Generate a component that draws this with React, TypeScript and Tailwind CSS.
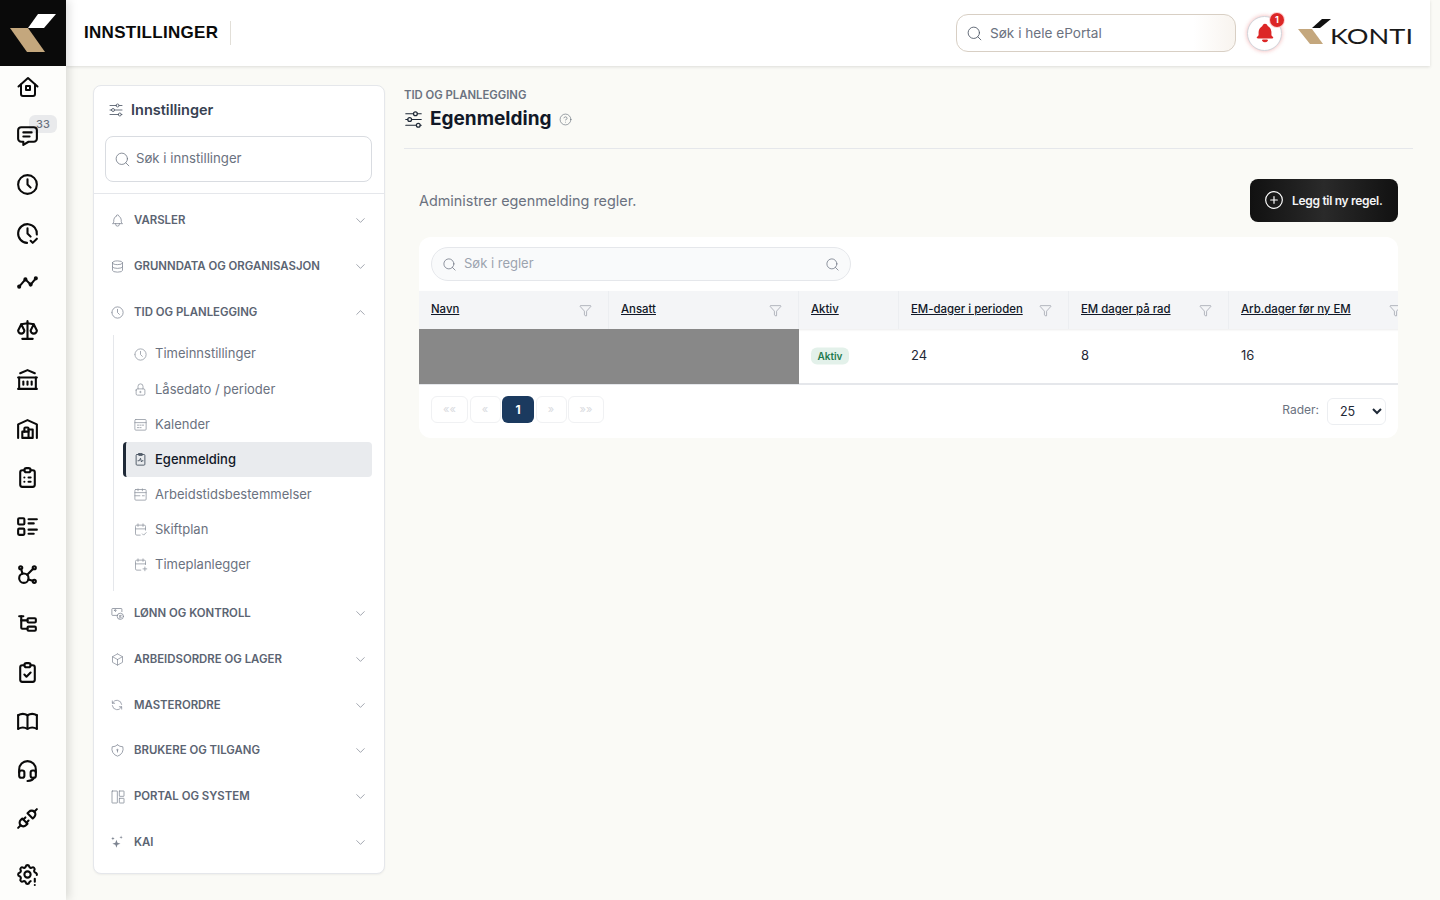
import { ReactNode } from "react";
import {
  ChevronDown,
  ChevronUp,
  CirclePlus,
  CircleQuestionMark,
  Funnel,
  Search,
} from "lucide-react";
import {
  TbAdjustmentsHorizontal,
  TbAffiliate,
  TbBell,
  TbBellFilled,
  TbBook,
  TbBox,
  TbBuildingBank,
  TbBuildingWarehouse,
  TbCalendarCheck,
  TbCalendarPlus,
  TbClipboardCheck,
  TbClipboardList,
  TbClock,
  TbClockCheck,
  TbDatabase,
  TbHeadset,
  TbListDetails,
  TbLock,
  TbMessage,
  TbPlugConnected,
  TbRefresh,
  TbScale,
  TbSettingsExclamation,
  TbShieldLock,
  TbSubtask,
  TbTimeline,
} from "react-icons/tb";

const Svg = ({ size = 24, sw = 2, children }: { size?: number; sw?: number; children: ReactNode }) => (
  <svg width={size} height={size} viewBox="0 0 24 24" fill="none" stroke="currentColor" strokeWidth={sw} strokeLinecap="round" strokeLinejoin="round">
    {children}
  </svg>
);

const HomeIcon = () => (
  <Svg>
    <path d="M2.500 11.500 12 3l9.500 8.500" />
    <path d="M5 9.500V19a2 2 0 0 0 2 2h10a2 2 0 0 0 2-2V9.500" />
    <rect x="10" y="11" width="4" height="4" />
  </Svg>
);

const PayIcon = () => (
  <Svg size={15} sw={1.2}>
    <path d="M12 15H4a1 1 0 0 1-1-1V5a1 1 0 0 1 1-1h14a1 1 0 0 1 1 1v4" />
    <path d="M10 7H7l2-2M7 7l2 2" />
    <circle cx="16.500" cy="16.500" r="5" />
    <path d="M18 15h-2a1 1 0 0 0 0 2h1a1 1 0 0 1 0 2h-2" />
  </Svg>
);
const PortalIcon = () => (
  <Svg size={16} sw={1.1}>
    <rect x="3" y="3" width="8" height="18" rx="0.5" />
    <rect x="14" y="3" width="7" height="8" rx="0.5" />
    <rect x="14" y="14" width="7" height="7" rx="0.5" />
  </Svg>
);
const TableCalIcon = () => (
  <Svg size={15} sw={1.2}>
    <rect x="3" y="4" width="18" height="17" rx="1.500" />
    <path d="M3 9h18M7 13h2M11 13h2M15 13h2M7 17h2M11 17h2" />
  </Svg>
);
const PulseClipIcon = () => (
  <Svg size={15} sw={1.5}>
    <rect x="5" y="4" width="14" height="17" rx="1.500" />
    <rect x="9" y="2.500" width="6" height="3" rx="0.5" />
    <path d="M8 14h2l2-4 1.500 6 1-2h1.500" />
  </Svg>
);
const RulesCalIcon = () => (
  <Svg size={15} sw={1.2}>
    <rect x="3" y="4" width="18" height="17" rx="1.500" />
    <path d="M3 9h18M3 14h8M15 6V3M8 6V3M15 14h3" />
  </Svg>
);
const SparkIcon = () => (
  <svg width="14" height="14" viewBox="0 0 24 24" fill="currentColor">
    <path d="M11 8l1.800 5.200L18 15l-5.200 1.800L11 22l-1.800-5.200L4 15l5.200-1.800z" />
    <path d="M5 3l.8 2.200L8 6l-2.200.8L5 9l-.8-2.200L2 6l2.200-.8z" />
    <path d="M19 1l.7 2.300L22 4l-2.300.7L19 7l-.7-2.300L16 4l2.300-.7z" />
  </svg>
);

const railTop = [
  <HomeIcon />,
  <TbMessage size={25} strokeWidth={2} />,
  <TbClock size={25} strokeWidth={2} />,
  <TbClockCheck size={25} strokeWidth={2} />,
  <TbTimeline size={25} strokeWidth={2} />,
  <TbScale size={25} strokeWidth={2} />,
  <TbBuildingBank size={25} strokeWidth={2} />,
  <TbBuildingWarehouse size={25} strokeWidth={2} />,
  <TbClipboardList size={25} strokeWidth={2} />,
  <TbListDetails size={25} strokeWidth={2} />,
  <TbAffiliate size={25} strokeWidth={2} />,
  <TbSubtask size={25} strokeWidth={2} />,
  <TbClipboardCheck size={25} strokeWidth={2} />,
  <TbBook size={25} strokeWidth={2} />,
  <TbHeadset size={25} strokeWidth={2} />,
  <TbPlugConnected size={25} strokeWidth={2} />,
];

const subItems = [
  { label: "Timeinnstillinger", icon: <TbClock size={15} strokeWidth={1.2} /> },
  { label: "Låsedato / perioder", icon: <TbLock size={15} strokeWidth={1.2} /> },
  { label: "Kalender", icon: <TableCalIcon /> },
  { label: "Egenmelding", icon: <PulseClipIcon />, active: true },
  { label: "Arbeidstidsbestemmelser", icon: <RulesCalIcon /> },
  { label: "Skiftplan", icon: <TbCalendarCheck size={15} strokeWidth={1.2} /> },
  { label: "Timeplanlegger", icon: <TbCalendarPlus size={15} strokeWidth={1.2} /> },
];

const Section = ({ icon, label, open }: { icon: ReactNode; label: string; open?: boolean }) => (
  <div className="flex h-[45.7px] items-center pl-[16px] pr-[16px]">
    <span className="flex w-[24px] shrink-0 items-center text-[#7c8390]">{icon}</span>
    <span className="flex-1 text-[11.4px] font-semibold text-[#5b6472]">{label}</span>
    {open ? <ChevronUp size={15} strokeWidth={1} className="text-[#6b7280]" /> : <ChevronDown size={15} strokeWidth={1} className="text-[#6b7280]" />}
  </div>
);

const columns = [
  { label: "Navn", w: "w-[190px]", filter: true },
  { label: "Ansatt", w: "w-[190px]", filter: true },
  { label: "Aktiv", w: "w-[100px]", filter: false },
  { label: "EM-dager i perioden", w: "w-[170px]", filter: true },
  { label: "EM dager på rad", w: "w-[160px]", filter: true },
  { label: "Arb.dager før ny EM", w: "w-[190px]", filter: true },
];

const PageButton = ({ w, children }: { w: string; children: string }) => (
  <div className={`flex h-[27px] items-center justify-center rounded-md border border-[#f0f1f3] text-[11px] text-[#d9dbe0] ${w}`}>
    {children}
  </div>
);

export default function App() {
  return (
    <div className="flex h-[900px] w-[1440px] overflow-hidden bg-[#fafaf6] font-['Inter',sans-serif] text-[#111827]">
      {/* venstre meny */}
      <aside className="relative z-20 flex h-[900px] w-[66px] shrink-0 flex-col bg-[#fdfdfb] shadow-[3px_0_9px_rgba(0,0,0,0.13)]">
        <div className="h-[66px] w-[66px] shrink-0 bg-[#0a0a0a]">
          <svg width="66" height="66" viewBox="0 0 66 66">
            <polygon points="38,14 56,14 44,28 28,28" fill="#ffffff" />
            <polygon points="10,28 28,28 45,52 27,52" fill="#c4a77d" />
          </svg>
        </div>
        <div className="-mt-[3.5px] flex flex-col">
          {railTop.map((icon, i) => (
            <div key={i} className="relative flex h-[48.8px] w-[55px] items-center justify-center text-[#0a0a0a]">
              {i === 1 && (
                <span className="absolute left-[29px] top-[4px] flex h-[18px] w-[28px] items-center justify-center rounded-md bg-[#e9eaec] text-[11px] font-medium text-[#6b7280]">
                  33
                </span>
              )}
              <span className="relative">{icon}</span>
            </div>
          ))}
        </div>
        <div className="mt-[7.7px] flex h-[48px] w-[55px] items-center justify-center text-[#0a0a0a]">
          <TbSettingsExclamation size={25} strokeWidth={2} />
        </div>
      </aside>

      <div className="flex w-[1374px] flex-col">
        {/* toppfelt */}
        <header className="relative z-10 flex h-[66px] w-[1364px] shrink-0 items-center bg-white pl-[18px] shadow-[0_1px_3px_rgba(0,0,0,0.12)]">
          <h1 className="font-['Liberation_Sans',sans-serif] text-[17px] font-bold tracking-[0.3px] text-[#0a0a0a]">INNSTILLINGER</h1>
          <div className="ml-[12px] h-[24px] w-px bg-[#e2dfd8]" />
          <div className="ml-auto flex h-[38px] w-[280px] items-center rounded-xl border border-[#d8cfc4] bg-gradient-to-r from-white from-85% to-[#f8f4ef] pl-[9px]">
            <Search size={17} strokeWidth={1.2} className="text-[#4b5563]" />
            <span className="ml-[7px] text-[13.6px] text-[#6b7280]">Søk i hele ePortal</span>
          </div>
          <div className="relative ml-[11px] flex h-[35px] w-[35px] items-center justify-center rounded-full border border-[#d1d5db] bg-white shadow-[0_0_4px_rgba(220,38,38,0.35)]">
            <TbBellFilled size={22} className="text-[#dc2626]" />
            <span className="absolute -right-[3px] -top-[1px] flex h-[14px] w-[14px] -translate-y-[3px] items-center justify-center rounded-full bg-[#dc2626] text-[9px] font-bold text-white shadow-[0_0_0_1px_rgba(254,202,202,0.9)]">
              1
            </span>
          </div>
          <svg width="116" height="30" viewBox="0 0 116 30" className="ml-[16px] mr-[16px]">
            <polygon points="24,1 33,1 22,10 14,10" fill="#111111" />
            <polygon points="0,11 14,11 25,26 12,26" fill="#c4a77d" />
            <text x="32" y="26" textLength="83" lengthAdjust="spacingAndGlyphs" fontFamily="Lato, sans-serif" fontSize="21" fill="#1a1a1a">
              KONTI
            </text>
          </svg>
        </header>

        <main className="flex flex-1 pl-[27px] pt-[19px]">
          {/* innstillingsmeny */}
          <nav className="flex h-[789px] w-[292px] shrink-0 flex-col rounded-lg border border-[#e5e7eb] bg-white shadow-[0_1px_2px_rgba(0,0,0,0.05)]">
            <div className="mb-[2px] flex h-[48px] items-center pl-[13px]">
              <TbAdjustmentsHorizontal size={18} strokeWidth={1.1} className="text-[#4b5563]" />
              <span className="ml-[6px] text-[14.5px] font-semibold text-[#374151]">Innstillinger</span>
            </div>
            <div className="ml-[11px] mr-[12px] flex h-[46px] items-center rounded-lg border border-[#d9dce1] pl-[8px]">
              <Search size={17} strokeWidth={1.1} className="text-[#6b7280]" />
              <span className="ml-[5px] text-[13.2px] text-[#6b7280]">Søk i innstillinger</span>
            </div>
            <div className="mt-[11px] h-px bg-[#e5e7eb]" />
            <div className="mt-[4px] flex flex-col">
              <Section icon={<TbBell size={15} strokeWidth={1.2} />} label="VARSLER" />
              <Section icon={<TbDatabase size={15} strokeWidth={1.2} />} label="GRUNNDATA OG ORGANISASJON" />
              <Section icon={<TbClock size={15} strokeWidth={1.2} />} label="TID OG PLANLEGGING" open />
              <div className="ml-[19px] mr-[12px] flex flex-col border-l border-[#e5e7eb] pb-[8.5px] pl-[9px] pt-[1.5px]">
                {subItems.map((item) => (
                  <div
                    key={item.label}
                    className={
                      item.active
                        ? "my-[0.5px] flex h-[34.15px] items-center rounded-[4px] border-l-[3px] border-[#1f2937] bg-[#e9ebee] pl-[7px] text-[13px] font-medium text-[#111827]"
                        : "flex h-[35.15px] items-center pl-[10px] text-[13px] text-[#6b7280]"
                    }
                  >
                    <span className={item.active ? "flex w-[22px] shrink-0 items-center text-[#4b5563]" : "flex w-[22px] shrink-0 items-center text-[#8b929c]"}>
                      {item.icon}
                    </span>
                    {item.label}
                  </div>
                ))}
              </div>
              <Section icon={<PayIcon />} label="LØNN OG KONTROLL" />
              <Section icon={<TbBox size={15} strokeWidth={1.1} />} label="ARBEIDSORDRE OG LAGER" />
              <Section icon={<TbRefresh size={14} strokeWidth={1.2} />} label="MASTERORDRE" />
              <Section icon={<TbShieldLock size={15} strokeWidth={1.2} />} label="BRUKERE OG TILGANG" />
              <Section icon={<PortalIcon />} label="PORTAL OG SYSTEM" />
              <Section icon={<SparkIcon />} label="KAI" />
            </div>
          </nav>

          {/* innhold */}
          <section className="ml-[19px] w-[1009px] shrink-0">
            <div className="border-b border-[#e5e7eb] pb-[15px]">
              <div className="text-[11.3px] font-semibold leading-[20px] text-[#6b7280]">TID OG PLANLEGGING</div>
              <div className="flex h-[28px] items-center">
                <TbAdjustmentsHorizontal size={23} strokeWidth={1.3} className="-ml-[2px] text-[#1f2937]" />
                <h2 className="ml-[5px] text-[19px] font-bold text-[#111827]">Egenmelding</h2>
                <CircleQuestionMark size={13} strokeWidth={1} className="ml-[7.5px] text-[#4b5563]" />
              </div>
            </div>

            <div className="pl-[15px] pr-[15px]">
              <div className="mt-[30px] flex h-[43px] items-center justify-between">
                <p className="text-[14.4px] text-[#6b7280]">Administrer egenmelding regler.</p>
                <button className="flex h-[43px] w-[148px] items-center rounded-lg bg-gradient-to-r from-[#111111] via-[#2a2a2a] to-[#111111] pl-[14px] text-[12px] font-semibold tracking-[-0.3px] text-[#f3f4f6]">
                  <CirclePlus size={20} strokeWidth={1.4} className="mr-[8px] -translate-y-[1px] text-white" />
                  Legg til ny regel.
                </button>
              </div>

              <div className="mt-[15px] h-[201px] overflow-hidden rounded-xl bg-white">
                <div className="px-[12px] pt-[10px]">
                  <div className="flex h-[34px] w-[420px] items-center rounded-full border border-[#e5e7eb] bg-[#f9fafb] px-[10px]">
                    <Search size={15} strokeWidth={1.2} className="text-[#6b7280]" />
                    <span className="ml-[7px] flex-1 text-[13px] text-[#9ca3af]">Søk i regler</span>
                    <Search size={15} strokeWidth={1.2} className="text-[#6b7280]" />
                  </div>
                </div>

                <div className="mt-[10px] flex h-[38px] w-[1010px] bg-[#f4f5f7] shadow-[0_1px_2px_rgba(0,0,0,0.08)]">
                  {columns.map((col) => (
                    <div key={col.label} className={`flex shrink-0 items-center justify-between border-r border-[#eceef1] pl-[12px] pr-[16px] ${col.w}`}>
                      <span className="text-[11.4px] font-medium text-[#111827] underline">{col.label}</span>
                      {col.filter && <Funnel size={13} strokeWidth={0.9} className="text-[#6b7280]" />}
                    </div>
                  ))}
                </div>

                <div className="flex h-[56px] border-b-2 border-[#e5e7eb]">
                  <div className="h-[55px] w-[380px] bg-[#888888]" />
                  <div className="flex w-[100px] items-center pl-[12px]">
                    <span className="-translate-y-[0.5px] rounded-md bg-[#e3f1ea] px-[6.5px] py-[1px] text-[10px] font-semibold text-[#1f7a4f]">Aktiv</span>
                  </div>
                  <div className="flex w-[170px] items-center pl-[12px] text-[13px] text-[#1f2937]">24</div>
                  <div className="flex w-[160px] items-center pl-[12px] text-[13px] text-[#1f2937]">8</div>
                  <div className="flex w-[160px] items-center pl-[12px] text-[13px] text-[#1f2937]">16</div>
                </div>

                <div className="flex items-start justify-between pl-[12px] pr-[12px] pt-[11px]">
                  <div className="flex items-center gap-[1.5px]">
                    <PageButton w="w-[37px]">««</PageButton>
                    <PageButton w="w-[31px]">«</PageButton>
                    <div className="flex h-[27px] w-[32px] items-center justify-center rounded-md bg-[#1b3a5f] text-[12px] font-bold text-white">1</div>
                    <PageButton w="w-[31px]">»</PageButton>
                    <PageButton w="w-[36px]">»»</PageButton>
                  </div>
                  <div className="flex items-center">
                    <span className="-translate-y-[1px] text-[12px] text-[#6b7280]">Rader:</span>
                    <select defaultValue="25" className="ml-[8px] mt-[2px] h-[27px] w-[59px] rounded-md border border-[#eceef1] bg-white pl-[8px] text-[12.5px] text-[#1f2937]">
                      <option value="25">25</option>
                    </select>
                  </div>
                </div>
              </div>
            </div>
          </section>
        </main>
      </div>
    </div>
  );
}
